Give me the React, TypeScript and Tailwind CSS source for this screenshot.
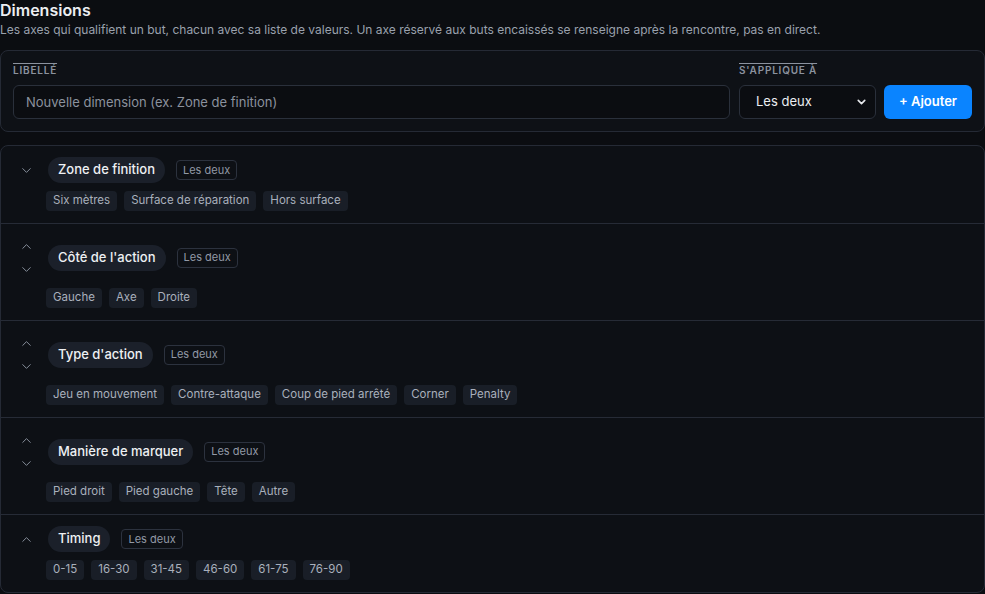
import { ChevronDown, ChevronUp } from "lucide-react";

type Dimension = {
  name: string;
  scope: string;
  values: string[];
  up: boolean;
  down: boolean;
};

const dimensions: Dimension[] = [
  { name: "Zone de finition", scope: "Les deux", values: ["Six mètres", "Surface de réparation", "Hors surface"], up: false, down: true },
  { name: "Côté de l'action", scope: "Les deux", values: ["Gauche", "Axe", "Droite"], up: true, down: true },
  { name: "Type d'action", scope: "Les deux", values: ["Jeu en mouvement", "Contre-attaque", "Coup de pied arrêté", "Corner", "Penalty"], up: true, down: true },
  { name: "Manière de marquer", scope: "Les deux", values: ["Pied droit", "Pied gauche", "Tête", "Autre"], up: true, down: true },
  { name: "Timing", scope: "Les deux", values: ["0-15", "16-30", "31-45", "46-60", "61-75", "76-90"], up: true, down: false },
];

function DimensionRow({ dim, last }: { dim: Dimension; last: boolean }) {
  return (
    <div className={`px-3 pt-[11px] pb-3 ${last ? "" : "border-b border-[#262b36]"}`}>
      <div className="flex items-center gap-[9px]">
        <div className="w-[26px] flex flex-col items-center gap-px">
          {dim.up && (
            <button className="h-[22px] flex items-center justify-center text-[#8d95a2]">
              <ChevronUp size={15} strokeWidth={1.5} />
            </button>
          )}
          {dim.down && (
            <button className="h-[22px] flex items-center justify-center text-[#8d95a2]">
              <ChevronDown size={15} strokeWidth={1.5} />
            </button>
          )}
        </div>
        <span className="h-[26px] flex items-center px-[10px] rounded-full bg-[#1b202a] text-[13px] font-medium text-[#eef0f3]">
          {dim.name}
        </span>
        <span className="ml-[2px] h-5 flex items-center px-[6px] rounded border border-[#2c323e] text-[11px] text-[#9299a6]">
          {dim.scope}
        </span>
      </div>
      <div className="mt-2 ml-[33px] flex flex-wrap gap-[7px]">
        {dim.values.map((v) => (
          <span
            key={v}
            className="h-5 flex items-center px-[7px] rounded bg-[#191e27] text-[11.5px] text-[#a9b0bc]"
          >
            {v}
          </span>
        ))}
      </div>
    </div>
  );
}

export default function App() {
  return (
    <div
      className="min-h-screen bg-[#0b0d11] text-[#e6e8ec] w-[985px]"
      style={{ fontFamily: "Inter, 'Noto Sans', sans-serif" }}
    >
      <h2 className="text-[16px] leading-[20px] font-semibold text-[#eceef1]">Dimensions</h2>
      <p className="mt-[2px] text-[12px] leading-[16px] text-[#9aa1ad]">
        Les axes qui qualifient un but, chacun avec sa liste de valeurs. Un axe réservé aux buts encaissés se renseigne après la rencontre, pas en direct.
      </p>

      {/* formulaire d'ajout */}
      <div className="mt-[12px] rounded-lg border border-[#252a35] bg-[#0e1116] p-3 flex items-end gap-2">
        <div className="flex-1 flex flex-col gap-2">
          <label className="text-[10px] leading-[14px] font-semibold tracking-[0.08em] uppercase text-[#8b929e] overline self-start">
            Libellé
          </label>
          <input
            type="text"
            placeholder="Nouvelle dimension (ex. Zone de finition)"
            className="h-[34px] w-full rounded-md border border-[#2a303b] bg-[#0b0d11] px-3 text-[13px] text-[#e6e8ec] placeholder-[#8b929e] focus:outline-none"
          />
        </div>
        <div className="flex flex-col gap-2 ml-px">
          <label className="text-[10px] leading-[14px] font-semibold tracking-[0.08em] uppercase text-[#8b929e] overline self-start">
            S'applique à
          </label>
          <div className="relative w-[137px]">
            <select className="h-[34px] w-full appearance-none rounded-md border border-[#2a303b] bg-[#0b0d11] pl-4 pr-7 text-[13px] text-[#eceef1] focus:outline-none">
              <option>Les deux</option>
            </select>
            <ChevronDown
              size={13}
              strokeWidth={3}
              className="pointer-events-none absolute right-[8px] top-1/2 -translate-y-1/2 text-[#e6e8ec]"
            />
          </div>
        </div>
        <button className="h-[34px] w-[88px] rounded-md bg-[#0a84ff] text-[13px] font-semibold text-white">
          + Ajouter
        </button>
      </div>

      {/* liste des dimensions */}
      <div className="mt-[13px] rounded-lg border border-[#252a35] bg-[#0d1015]">
        {dimensions.map((d, i) => (
          <DimensionRow key={d.name} dim={d} last={i === dimensions.length - 1} />
        ))}
      </div>
    </div>
  );
}
